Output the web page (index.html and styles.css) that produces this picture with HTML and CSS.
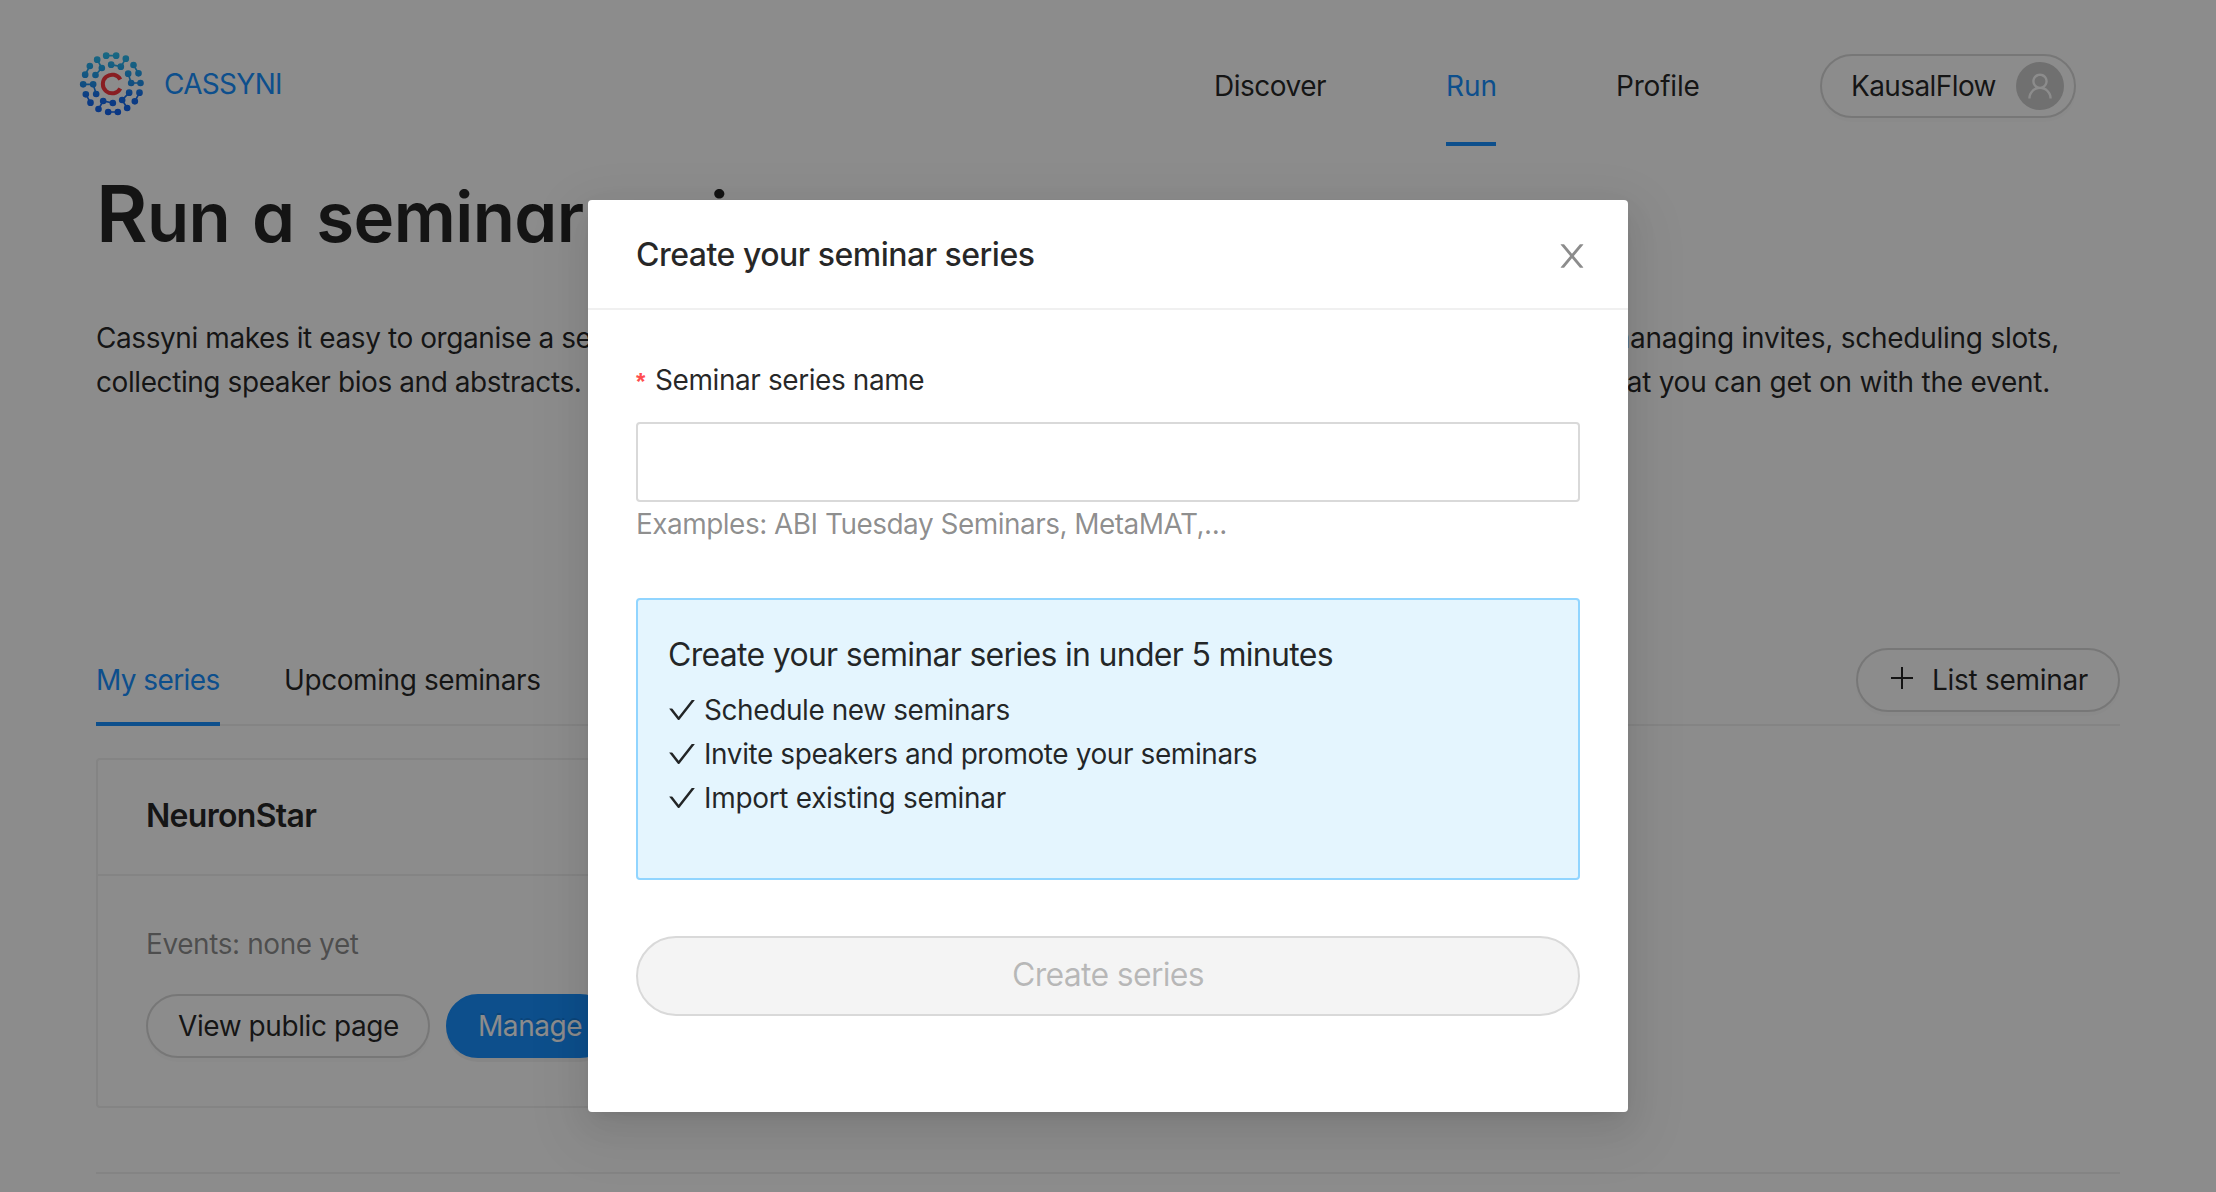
FILE: index.html
```html
<!DOCTYPE html>
<html lang="en">
<head>
<meta charset="utf-8">
<title>Cassyni</title>
<link rel="stylesheet" href="styles.css">
</head>
<body>
<div class="page">
  <header class="header">
    <a class="brand">
      <svg class="brand-mark" viewBox="56.500 63 198 198">
        <defs>
          <linearGradient id="ring" gradientUnits="userSpaceOnUse" x1="0" y1="67" x2="0" y2="256">
            <stop offset="0" stop-color="#2dbfee"/>
            <stop offset="0.5" stop-color="#1f8fea"/>
            <stop offset="0.7" stop-color="#166ff0"/>
            <stop offset="1" stop-color="#1464f0"/>
          </linearGradient>
        </defs>
        <path class="brand-links" d="M138 77H168.1M111 89L125 114L106 135M197 86L182 110L153 104M89 108L75 134M220 105L235 130M204 131L213 159H241M69 163H99L108 192M77 193L91 218M115 237L129 213L158 219M144 246H173.1M201 234L186 210L207 188M238 188L224 214"/>
        <path class="brand-dots" d="M138 77h0M168 77h0M111 89h0M125 114h0M106 135h0M197 86h0M182 110h0M153 104h0M89 108h0M75 134h0M220 105h0M235 130h0M204 131h0M213 159h0M241 159h0M69 163h0M99 163h0M108 192h0M77 193h0M91 218h0M115 237h0M129 213h0M158 219h0M144 246h0M173 246h0M201 234h0M186 210h0M207 188h0M238 188h0M224 214h0"/>
        <path class="brand-c" d="M180.500 148.500A28 28 0 1 0 180.500 175.500"/>
      </svg>
      <span class="brand-name">CASSYNI</span>
    </a>
    <nav class="nav">
      <a class="nav-item nav-discover">Discover</a>
      <a class="nav-item nav-run active">Run</a>
      <a class="nav-item nav-profile">Profile</a>
      <button class="btn user-btn"><span class="user-name">KausalFlow</span>
        <span class="avatar"><svg viewBox="64 64 896 896"><path d="M858.5 763.6a374 374 0 00-80.6-119.5 375.63 375.63 0 00-119.5-80.6c-.4-.2-.8-.3-1.2-.5C719.5 518 760 444.7 760 362c0-137-111-248-248-248S264 225 264 362c0 82.7 40.5 156 102.800 201.100-.4.2-.8.3-1.200.5-44.800 18.900-85 46-119.500 80.600a375.630 375.630 0 00-80.600 119.500A371.700 371.700 0 00136 901.800a8 8 0 008 8.200h60c4.400 0 7.900-3.500 8-7.800 2-77.200 33-149.500 87.800-204.300 56.700-56.700 132-87.900 212.200-87.900s155.500 31.200 212.200 87.900C779 752.700 810 825 812 902.200c.1 4.400 3.600 7.800 8 7.800h60a8 8 0 008-8.200c-1-47.800-10.900-94.300-29.500-138.200zM512 534c-45.900 0-89.100-17.900-121.600-50.400S340 407.900 340 362c0-45.900 17.900-89.100 50.400-121.600S466.100 190 512 190s89.100 17.900 121.600 50.400S684 316.100 684 362c0 45.900-17.900 89.100-50.400 121.600S557.900 534 512 534z"/></svg></span>
      </button>
    </nav>
  </header>

  <main class="content">
    <h1 class="title"><span class="title-cap">R</span>un a seminar series</h1>
    <div class="intro">
      <div class="intro-line"><span class="intro-a">Cassyni makes it easy to organise a seminar</span><span class="intro-b">managing invites, scheduling slots,</span></div>
      <div class="intro-line second"><span class="intro-a">collecting speaker bios and abstracts.</span><span class="intro-b">so that you can get on with the event.</span></div>
    </div>

    <div class="tabs">
      <a class="tab active">My series</a>
      <a class="tab tab-upcoming">Upcoming seminars</a>
      <button class="btn list-btn"><svg class="plus" viewBox="0 0 22 22"><path d="M0 11H22M11 0V22"/></svg><span class="list-label">List seminar</span></button>
    </div>

    <section class="card">
      <h2 class="card-head">NeuronStar</h2>
      <div class="card-body">
        <p class="events">Events: none yet</p>
        <div class="actions">
          <button class="btn view-btn">View public page</button>
          <button class="btn primary">Manage</button>
        </div>
      </div>
    </section>
    <hr class="rule">
  </main>
</div>

<div class="mask">
  <div class="modal" role="dialog">
    <div class="modal-head">
      <span class="modal-title">Create your seminar series</span>
      <svg class="close" viewBox="64 64 896 896"><path d="M563.8 512l262.5-312.9c4.4-5.2.7-13.1-6.1-13.1h-79.8c-4.7 0-9.2 2.1-12.3 5.7L511.600 449.800 295.100 191.700c-3-3.600-7.500-5.700-12.300-5.700H203c-6.800 0-10.500 7.900-6.100 13.100L459.400 512 196.900 824.900A7.950 7.950 0 00203 838h79.800c4.700 0 9.200-2.100 12.300-5.700l216.500-258.100 216.500 258.100c3 3.600 7.500 5.700 12.300 5.700h79.800c6.800 0 10.500-7.900 6.100-13.100L563.800 512z"/></svg>
    </div>
    <div class="modal-body">
      <label class="field-label"><span class="star">*</span><span class="label-text">Seminar series name</span></label>
      <input class="field" type="text">
      <div class="hint">Examples: ABI Tuesday Seminars, MetaMAT,...</div>
      <div class="info">
        <div class="info-title">Create your seminar series in under 5 minutes</div>
        <div class="info-item"><svg class="check" viewBox="64 64 896 896"><path d="M912 190h-69.900c-9.800 0-19.100 4.500-25.100 12.200L404.700 724.500 207 474a32 32 0 00-25.100-12.200H112c-6.700 0-10.400 7.700-6.300 12.900l273.900 347c12.800 16.200 37.400 16.200 50.300 0l488.400-618.900c4.100-5.100.4-12.800-6.300-12.800z"/></svg><span class="item-a">Schedule new seminars</span></div>
        <div class="info-item"><svg class="check" viewBox="64 64 896 896"><path d="M912 190h-69.900c-9.800 0-19.100 4.500-25.100 12.200L404.700 724.500 207 474a32 32 0 00-25.100-12.200H112c-6.700 0-10.400 7.700-6.300 12.900l273.900 347c12.800 16.200 37.400 16.200 50.300 0l488.400-618.900c4.100-5.100.4-12.800-6.300-12.800z"/></svg><span class="item-b">Invite speakers and promote your seminars</span></div>
        <div class="info-item"><svg class="check" viewBox="64 64 896 896"><path d="M912 190h-69.900c-9.800 0-19.100 4.500-25.100 12.200L404.700 724.500 207 474a32 32 0 00-25.100-12.200H112c-6.700 0-10.400 7.700-6.300 12.900l273.900 347c12.800 16.200 37.400 16.200 50.300 0l488.400-618.900c4.100-5.100.4-12.800-6.300-12.800z"/></svg><span class="item-c">Import existing seminar</span></div>
      </div>
      <button class="submit" disabled>Create series</button>
    </div>
  </div>
</div>
</body>
</html>
```

FILE: styles.css
```css
* { box-sizing: border-box; }
body {
  margin: 0;
  height: 1192px;
  overflow: hidden;
  position: relative;
  background: #fff;
  color: rgba(0, 0, 0, 0.85);
  font: 400 28px/44px Inter, "Liberation Sans", sans-serif;
  letter-spacing: -0.42px;
  white-space: nowrap;
}
a { color: inherit; }
button, input { font: inherit; color: inherit; letter-spacing: inherit; }

/* Header */
.header { display: flex; justify-content: space-between; height: 146px; padding: 0 140px 0 79px; }
.brand { display: flex; align-items: flex-start; color: #1890ff; }
.brand-mark { width: 66px; height: 66px; margin-top: 51px; }
.brand-links { fill: none; stroke: url(#ring); stroke-width: 5; }
.brand-dots { fill: none; stroke: url(#ring); stroke-width: 20; stroke-linecap: round; }
.brand-c { fill: none; stroke: #f9383f; stroke-width: 12; }
.brand-name { margin: 62px 0 0 19px; letter-spacing: -0.7px; }
.nav { display: flex; align-items: flex-start; }
.nav-item { height: 146px; padding-top: 64px; }
.nav-discover { width: 112px; margin-right: 120px; letter-spacing: -0.5px; }
.nav-run { width: 50px; margin-right: 120px; letter-spacing: -0.1px; }
.nav-profile { width: 84px; margin-right: 120px; letter-spacing: -0.2px; }
.nav-item.active { color: #1890ff; border-bottom: 4px solid #1890ff; }
.btn {
  display: flex;
  align-items: center;
  height: 64px;
  padding: 0 30px;
  border: 2px solid #d9d9d9;
  border-radius: 32px;
  background: #fff;
  box-shadow: 0 4px 0 rgba(0, 0, 0, 0.016);
}
.user-btn { width: 256px; margin-top: 54px; padding: 0 10px 0 29px; justify-content: space-between; letter-spacing: -0.6px; }
.avatar { display: flex; align-items: center; justify-content: center; width: 48px; height: 48px; border-radius: 50%; background: #ccc; }
.avatar svg { width: 28px; height: 28px; fill: #fff; }

/* Page content */
.content { padding: 0 96px; }
.title {
  margin: 21px 0 0;
  height: 100px;
  font-weight: 600;
  font-size: 69px;
  line-height: 100px;
  letter-spacing: -0.6px;
  word-spacing: 5px;
  font-feature-settings: "cv11";
}
.title-cap { font-size: 79px; line-height: 0; }
.intro { display: grid; margin-top: 49px; height: 332px; align-content: start; }
.intro-line { display: flex; justify-content: space-between; width: 1963px; }
.intro-line.second { width: 1954px; }
.intro-b { letter-spacing: -0.25px; }
.tabs { display: flex; height: 78px; border-bottom: 2px solid #f0f0f0; }
.tab { height: 78px; padding-top: 10px; }
.tab.active { width: 124px; margin-right: 64px; color: #1890ff; border-bottom: 4px solid #1890ff; letter-spacing: -0.6px; }
.list-btn { width: 264px; margin-left: auto; padding: 0 0 0 33px; letter-spacing: -0.3px; }
.plus { width: 22px; height: 22px; margin: -4px 19px 0 0; fill: none; stroke: currentColor; stroke-width: 2; }
.card { width: 700px; height: 350px; margin-top: 32px; border: 2px solid #f0f0f0; border-radius: 4px; }
.card-head { margin: 0; height: 116px; padding: 34px 48px 0; border-bottom: 2px solid #f0f0f0; font-size: 32px; font-weight: 600; letter-spacing: -0.7px; }
.card-body { padding: 46px 48px; }
.events { margin: 0 0 28px; color: rgba(0, 0, 0, 0.45); }
.actions { display: flex; gap: 16px; }
.view-btn { width: 284px; }
.primary { width: 166px; color: #fff; background: #1890ff; border-color: #1890ff; box-shadow: 0 4px 0 rgba(0, 0, 0, 0.045); text-shadow: 0 -2px 0 rgba(0, 0, 0, 0.12); }
.rule { margin: 64px 0 0; border: 0; border-top: 2px solid #f0f0f0; }

/* Dialog */
.mask { position: absolute; inset: 0; padding-top: 200px; background: rgba(0, 0, 0, 0.45); }
.modal {
  width: 1040px;
  height: 912px;
  margin: 0 auto;
  border-radius: 4px;
  background: #fff;
  box-shadow: 0 6px 12px -8px rgba(0, 0, 0, 0.12), 0 12px 32px 0 rgba(0, 0, 0, 0.08), 0 18px 56px 16px rgba(0, 0, 0, 0.05);
}
.modal-head { display: flex; justify-content: space-between; height: 110px; padding: 33px 40px 0 48px; border-bottom: 2px solid #f0f0f0; font-size: 32px; font-weight: 500; letter-spacing: -0.5px; }
.close { width: 32px; height: 32px; margin-top: 7px; fill: rgba(0, 0, 0, 0.45); }
.modal-body { display: flex; flex-direction: column; padding: 48px; }
.field-label { display: flex; height: 64px; }
.star { width: 19px; padding-top: 2px; color: #ff4d4f; font: 700 24px/44px "Liberation Sans", sans-serif; }
.field { height: 80px; border: 2px solid #d9d9d9; border-radius: 4px; padding: 0 22px; font-size: 32px; }
.hint { color: rgba(0, 0, 0, 0.45); height: 96px; letter-spacing: -0.53px; }
.info { height: 282px; padding: 30px; border: 2px solid #91d5ff; border-radius: 4px; background: #e4f5fe; }
.info-title { height: 58px; font-size: 32px; line-height: 49px; letter-spacing: -0.7px; }
.info-item { display: flex; align-items: center; height: 44px; }
.check { width: 28px; height: 28px; margin-right: 8px; fill: currentColor; }
.item-c { letter-spacing: -0.32px; }
.submit { height: 80px; margin-top: 56px; padding-bottom: 3px; border: 2px solid #d9d9d9; border-radius: 40px; background: #f4f4f4; color: rgba(0, 0, 0, 0.25); font-size: 32px; letter-spacing: -0.7px; }
```
